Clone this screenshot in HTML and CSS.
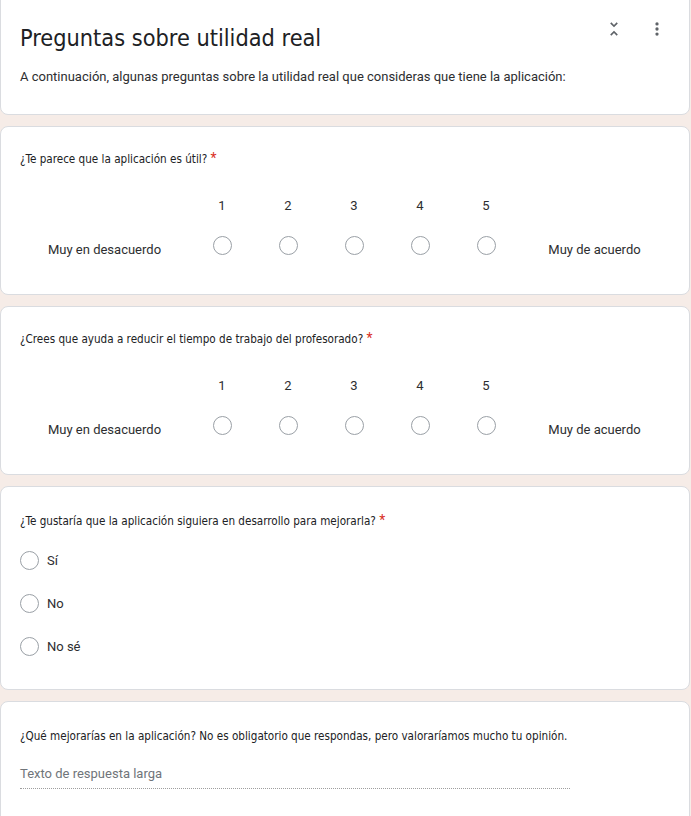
FILE: index.html
```html
<!DOCTYPE html>
<html lang="es">
<head>
<meta charset="utf-8">
<title>Preguntas sobre utilidad real</title>
<link rel="stylesheet" href="styles.css">
</head>
<body>
<main class="form">
  <section class="card header-card">
    <div class="header-top">
      <h1 class="title">Preguntas sobre utilidad real</h1>
      <div class="header-icons">
        <svg class="icon" viewBox="0 0 24 24" width="20" height="20"><path d="M7.41 18.59L8.83 20 12 16.83 15.17 20l1.41-1.41L12 14l-4.59 4.59zm9.18-13.18L15.17 4 12 7.17 8.83 4 7.41 5.41 12 10l4.59-4.59z"/></svg>
        <svg class="icon" viewBox="0 0 24 24" width="22" height="22"><circle cx="12" cy="6.5" r="1.8"/><circle cx="12" cy="12" r="1.8"/><circle cx="12" cy="17.5" r="1.8"/></svg>
      </div>
    </div>
    <p class="desc">A continuación, algunas preguntas sobre la utilidad real que consideras que tiene la aplicación:</p>
  </section>

  <section class="card q-card">
    <div class="question">¿Te parece que la aplicación es útil? <span class="req">*</span></div>
    <div class="scale">
      <span></span><span class="num">1</span><span class="num">2</span><span class="num">3</span><span class="num">4</span><span class="num">5</span><span></span>
      <span class="scale-label">Muy en desacuerdo</span>
      <span class="cell"><span class="radio"></span></span>
      <span class="cell"><span class="radio"></span></span>
      <span class="cell"><span class="radio"></span></span>
      <span class="cell"><span class="radio"></span></span>
      <span class="cell"><span class="radio"></span></span>
      <span class="scale-label">Muy de acuerdo</span>
    </div>
  </section>

  <section class="card q-card">
    <div class="question">¿Crees que ayuda a reducir el tiempo de trabajo del profesorado? <span class="req">*</span></div>
    <div class="scale">
      <span></span><span class="num">1</span><span class="num">2</span><span class="num">3</span><span class="num">4</span><span class="num">5</span><span></span>
      <span class="scale-label">Muy en desacuerdo</span>
      <span class="cell"><span class="radio"></span></span>
      <span class="cell"><span class="radio"></span></span>
      <span class="cell"><span class="radio"></span></span>
      <span class="cell"><span class="radio"></span></span>
      <span class="cell"><span class="radio"></span></span>
      <span class="scale-label">Muy de acuerdo</span>
    </div>
  </section>

  <section class="card choice-card">
    <div class="question">¿Te gustaría que la aplicación siguiera en desarrollo para mejorarla? <span class="req">*</span></div>
    <ul class="options">
      <li class="option"><span class="radio"></span><span>Sí</span></li>
      <li class="option"><span class="radio"></span><span>No</span></li>
      <li class="option"><span class="radio"></span><span>No sé</span></li>
    </ul>
  </section>

  <section class="card text-card">
    <div class="question">¿Qué mejorarías en la aplicación? No es obligatorio que respondas, pero valoraríamos mucho tu opinión.</div>
    <div class="long-answer">Texto de respuesta larga</div>
  </section>
</main>
</body>
</html>
```

FILE: styles.css
```css
html, body {
  margin: 0;
  padding: 0;
}
body {
  background: #f6ece7;
  font-family: Roboto, "Liberation Sans", Arial, sans-serif;
  color: #202124;
  overflow: hidden;
  height: 816px;
}
.form {
  display: flex;
  flex-direction: column;
  gap: 11px;
  width: 690px;
  margin-top: -12px;
}
.card {
  background: #fff;
  border: 1px solid #dadce0;
  border-radius: 8px;
  padding: 0 19px;
  box-sizing: border-box;
}
.header-card {
  height: 127px;
  padding-top: 28px;
}
.header-top {
  display: flex;
  justify-content: space-between;
  align-items: flex-start;
}
.title {
  margin: 4px 0 0;
  font-family: "DejaVu Sans", sans-serif;
  font-stretch: condensed;
  font-weight: normal;
  font-size: 23.3px;
  line-height: 34px;
  color: #202124;
}
.header-icons {
  display: flex;
  gap: 22px;
  align-items: center;
  margin-top: 1px;
  margin-right: 2px;
}
.icon {
  fill: #5f6368;
  display: block;
}
.desc {
  margin: 12px 0 0;
  font-size: 13px;
  line-height: 20px;
  color: #2d2e30;
}
.question {
  font-family: "DejaVu Sans", sans-serif;
  font-stretch: condensed;
  font-size: 11.6px;
  line-height: 20px;
  color: #202124;
}
.req {
  color: #d93025;
  font-family: Roboto, sans-serif;
  font-size: 14px;
}
.q-card {
  height: 169px;
  padding-top: 21px;
}
.scale {
  display: grid;
  grid-template-columns: 169px repeat(5, 66px) 1fr;
  grid-template-rows: 24px 57px;
  margin-top: 24px;
  align-items: center;
  font-size: 13px;
  color: #2d2e30;
}
.num {
  text-align: center;
}
.scale-label {
  text-align: center;
  padding-top: 8px;
}
.cell {
  display: flex;
  justify-content: center;
}
.radio {
  display: block;
  width: 19px;
  height: 19px;
  border: 1px solid #9aa0a6;
  border-radius: 50%;
  box-sizing: border-box;
  flex: none;
}
.choice-card {
  height: 204px;
  padding-top: 23px;
}
.options {
  list-style: none;
  margin: 17px 0 0;
  padding: 0;
  display: flex;
  flex-direction: column;
  gap: 19px;
}
.option {
  display: flex;
  align-items: center;
  gap: 8px;
  height: 24px;
  font-size: 13px;
  color: #2d2e30;
}
.text-card {
  height: 140px;
  padding-top: 24px;
}
.long-answer {
  margin-top: 18px;
  width: 550px;
  font-size: 13px;
  color: #70757a;
  line-height: 20px;
  padding-bottom: 4px;
  border-bottom: 1px dotted #9e9e9e;
}
```
